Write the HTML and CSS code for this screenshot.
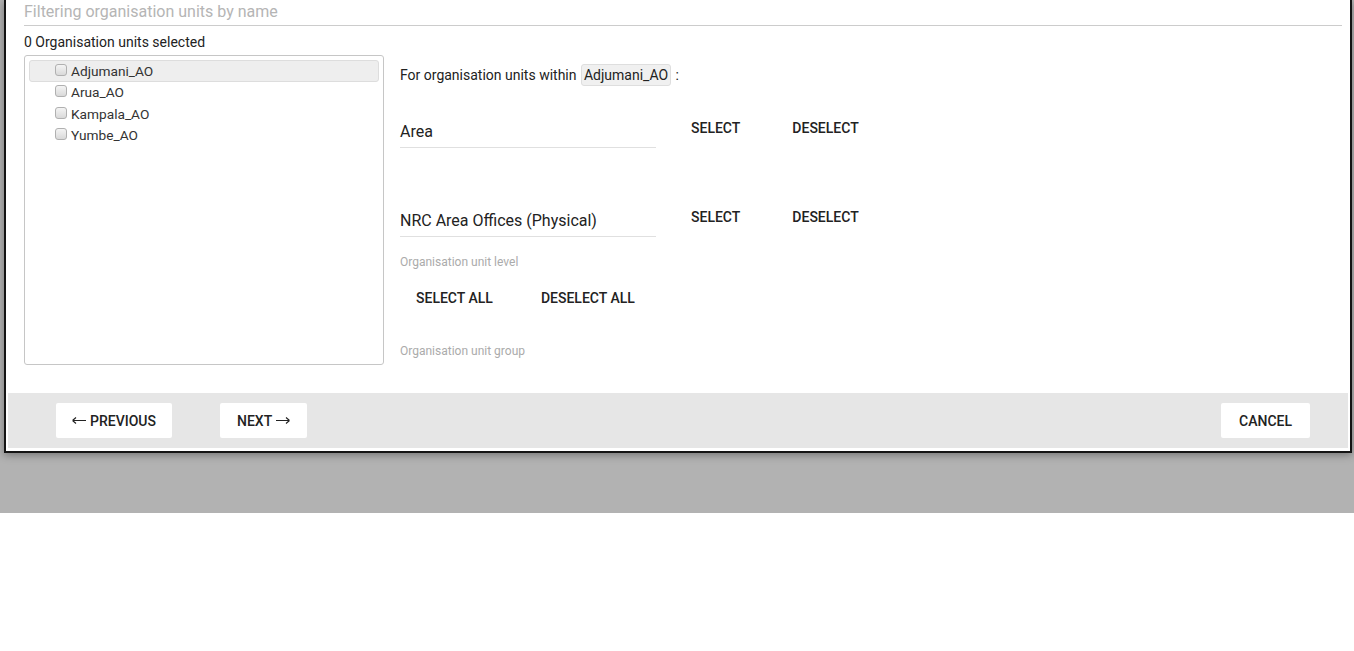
FILE: index.html
```html
<!DOCTYPE html>
<html lang="en">
<head>
<meta charset="utf-8">
<title>Organisation units</title>
<link rel="stylesheet" href="styles.css">
</head>
<body>
<div class="backdrop">
  <div class="dialog">
    <div class="body">
      <div class="filter">Filtering organisation units by name</div>
      <div class="count">0 Organisation units selected</div>
      <div class="main">
        <div class="tree">
          <div class="node selected"><span class="cb"></span><span class="lbl">Adjumani_AO</span></div>
          <div class="node"><span class="cb"></span><span class="lbl">Arua_AO</span></div>
          <div class="node"><span class="cb"></span><span class="lbl">Kampala_AO</span></div>
          <div class="node"><span class="cb"></span><span class="lbl">Yumbe_AO</span></div>
        </div>
        <div class="side">
          <div class="within">For organisation units within <span class="chip">Adjumani_AO</span> :</div>
          <div class="level-row">
            <div class="field">Area</div>
            <button class="flat first">Select</button>
            <button class="flat">Deselect</button>
          </div>
          <div class="level-row second">
            <div class="field">NRC Area Offices (Physical)</div>
            <button class="flat first">Select</button>
            <button class="flat">Deselect</button>
          </div>
          <div class="hint">Organisation unit level</div>
          <div class="all-row">
            <button class="flat">Select all</button>
            <button class="flat gap">Deselect all</button>
          </div>
          <div class="hint group">Organisation unit group</div>
        </div>
      </div>
    </div>
    <div class="footer">
      <button class="fbtn"><svg class="arrow left" width="14" height="9" viewBox="0 0 14 9"><path d="M0.5 4.5H14M0.5 4.5L4 1.5M0.5 4.5L4 7.5" stroke="#222" stroke-width="1.1" fill="none"/></svg>Previous</button>
      <button class="fbtn next">Next<svg class="arrow right" width="14" height="9" viewBox="0 0 14 9"><path d="M0 4.5H13.5M13.5 4.5L10 1.5M13.5 4.5L10 7.5" stroke="#222" stroke-width="1.1" fill="none"/></svg></button>
      <button class="fbtn cancel">Cancel</button>
    </div>
  </div>
</div>
</body>
</html>
```

FILE: styles.css
```css
html, body {
  margin: 0;
  padding: 0;
  background: #ffffff;
  font-family: Roboto, "Liberation Sans", Arial, sans-serif;
  color: #222222;
}

.backdrop {
  height: 513px;
  background: #b2b2b2;
  padding-left: 4px;
  box-sizing: border-box;
}

.dialog {
  width: 1348px;
  box-sizing: border-box;
  background: #ffffff;
  border: 2px solid #141414;
  border-top: none;
  padding: 0 2px 3px 2px;
  box-shadow: 0 2px 8px rgba(0, 0, 0, 0.35);
}

.body {
  height: 393px;
  padding: 1px 6px 0 16px;
  box-sizing: border-box;
}

.filter {
  font-size: 16px;
  line-height: 22px;
  color: #b5b5b5;
  padding-bottom: 2px;
  border-bottom: 1px solid #cccccc;
}

.count {
  margin-top: 8px;
  font-size: 14px;
  line-height: 16px;
  color: #222222;
}

.main {
  margin-top: 5px;
  display: flex;
  gap: 16px;
}

.tree {
  width: 360px;
  height: 310px;
  box-sizing: border-box;
  border: 1px solid #c6c6c6;
  border-radius: 3px;
  padding: 4px;
}

.node {
  height: 21.5px;
  line-height: 21.5px;
  padding-left: 26px;
  font-size: 13.7px;
  color: #333333;
  display: flex;
  align-items: center;
}

.node.selected {
  height: 20px;
  line-height: 20px;
  padding-left: 25px;
  background: #eeeeee;
  border: 1px solid #dddddd;
  border-radius: 3px;
}

.cb {
  width: 10px;
  height: 10px;
  border: 1px solid #b0b0b0;
  border-radius: 3px;
  background: linear-gradient(#f4f4f4, #d9d9d9);
  margin-right: 4px;
  margin-top: -3px;
  flex: none;
}

.side {
  display: flex;
  flex-direction: column;
  align-items: flex-start;
}

.within {
  margin-top: 9px;
  height: 22px;
  line-height: 22px;
  font-size: 14px;
  color: #222222;
}

.chip {
  display: inline-block;
  line-height: 20px;
  padding: 0 2px;
  margin: 0 1px;
  background: #f0f0f0;
  border: 1px solid #dedede;
  border-radius: 3px;
}

.level-row {
  margin-top: 24px;
  display: flex;
  align-items: flex-start;
}

.level-row.second {
  margin-top: 51px;
}

.field {
  width: 256px;
  margin-top: 11px;
  font-size: 16px;
  line-height: 22px;
  padding-bottom: 4px;
  border-bottom: 1px solid #e0e0e0;
  color: #222222;
}

.flat {
  height: 36px;
  padding: 0 16px;
  border: none;
  background: transparent;
  font-family: Roboto, "Liberation Sans", Arial, sans-serif;
  font-size: 14px;
  font-weight: 500;
  text-transform: uppercase;
  color: #222222;
  margin-left: 20px;
}

.flat.first {
  margin-left: 19px;
}

.hint {
  margin-top: 18px;
  font-size: 12px;
  line-height: 14px;
  color: #ababab;
}

.hint.group {
  margin-top: 28px;
}

.all-row {
  margin-top: 11px;
  display: flex;
}

.all-row .flat {
  margin-left: 0;
}

.all-row .flat.gap {
  margin-left: 16px;
}

.footer {
  height: 55px;
  box-sizing: border-box;
  background: #e6e6e6;
  display: flex;
  align-items: center;
  padding: 0 38px 0 48px;
}

.fbtn {
  height: 35px;
  padding: 0 16px;
  border: none;
  border-radius: 2px;
  background: #ffffff;
  font-family: Roboto, "Liberation Sans", Arial, sans-serif;
  font-size: 14px;
  font-weight: 500;
  text-transform: uppercase;
  color: #222222;
  display: flex;
  align-items: center;
}

.arrow.left {
  margin-right: 4px;
}

.arrow.right {
  margin-left: 4px;
}

.fbtn.next {
  margin-left: 48px;
  padding: 0 17px;
}

.fbtn.cancel {
  margin-left: auto;
  padding: 0 18px;
}
```
